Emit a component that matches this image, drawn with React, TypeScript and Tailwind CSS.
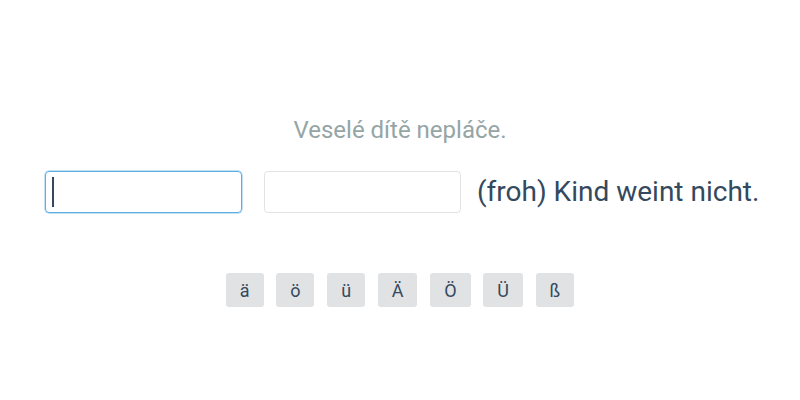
import { useState } from 'react';

const LETTERS = ['ä', 'ö', 'ü', 'Ä', 'Ö', 'Ü', 'ß'];

export default function App() {
    const [first, setFirst] = useState('');
    const [second, setSecond] = useState('');

    return (
        <div className="h-[400px] w-[800px] bg-white flex flex-col items-center font-['Roboto',sans-serif] text-[#34495e]">
            {/* Prompt */}
            <div className="pt-[115px] text-[24px] leading-[30px] text-[#95a5a6]">Veselé dítě nepláče.</div>

            {/* Answer row */}
            <div className="mt-[26px] w-full pl-[45px] flex items-center">
                <div className="relative">
                    <input
                        autoFocus
                        value={first}
                        onChange={(e) => setFirst(e.target.value)}
                        className="w-[197px] h-[42px] px-[7px] rounded-[4px] border border-[#5dade2] shadow-[0_0_0_0.5px_#8cc4ea] text-[28px] text-[#34495e] outline-none caret-[#34495e]"
                    />
                    {/* caret blinks, so draw it for the still */}
                    {first === '' && (
                        <span className="absolute left-[7px] top-[6px] w-[2px] h-[30px] bg-[#34495e] pointer-events-none" />
                    )}
                </div>
                <input
                    value={second}
                    onChange={(e) => setSecond(e.target.value)}
                    className="ml-[22px] w-[197px] h-[42px] px-[7px] rounded-[4px] border border-[#e3e3e3] text-[28px] text-[#34495e] outline-none focus:border-[#5dade2]"
                />
                <span className="ml-[16px] text-[28px] leading-[42px] whitespace-nowrap">(froh) Kind weint nicht.</span>
            </div>

            {/* Special characters */}
            <div className="mt-[60px] flex gap-[12.67px]">
                {LETTERS.map((l) => (
                    <button
                        key={l}
                        onClick={() => setFirst(first + l)}
                        className="h-[34px] px-[14px] rounded-[3px] bg-[#e1e2e4] text-[18px] text-[#34495e]"
                    >
                        {l}
                    </button>
                ))}
            </div>
        </div>
    );
}
